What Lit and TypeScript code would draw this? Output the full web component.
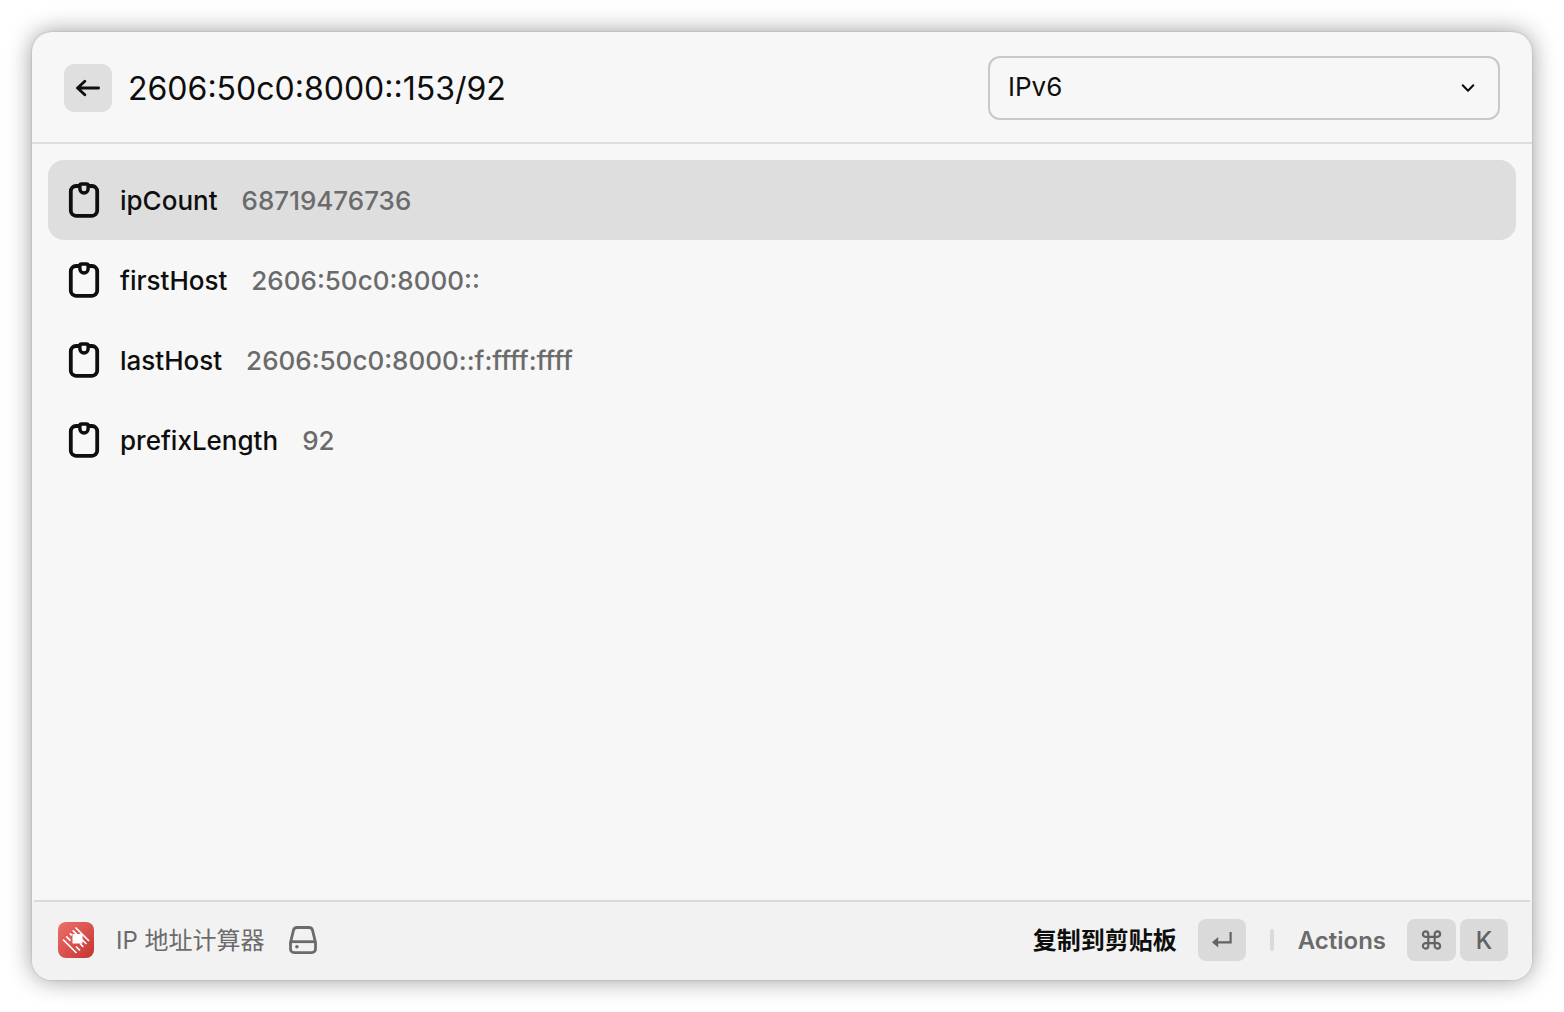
import { LitElement, html, css, svg } from "lit";
import { customElement, state } from "lit/decorators.js";
import { classMap } from "lit/directives/class-map.js";

interface Entry {
  name: string;
  value: string;
}

const entries: Entry[] = [
  { name: "ipCount", value: "68719476736" },
  { name: "firstHost", value: "2606:50c0:8000::" },
  { name: "lastHost", value: "2606:50c0:8000::f:ffff:ffff" },
  { name: "prefixLength", value: "92" },
];

const arrowIcon = html`<svg width="24" height="24" viewBox="0 0 24 24" fill="none" stroke="currentColor"
  stroke-width="2.8" stroke-linecap="round" stroke-linejoin="round" aria-hidden="true">
  <path d="M22.600 12H1.800M8.800 5.200L1.500 12l7.300 6.800" />
</svg>`;

const chevronIcon = html`<svg class="chevron" width="16" height="16" viewBox="0 0 16 16" fill="none" stroke="currentColor"
  stroke-width="2" stroke-linecap="round" stroke-linejoin="round" aria-hidden="true">
  <path d="M2.700 5.200L8 10.800l5.300-5.600" />
</svg>`;

const clipboardIcon = html`<svg width="32" height="40" viewBox="0 0 32 40" fill="none" stroke="currentColor"
  stroke-width="3.800" stroke-linejoin="round" aria-hidden="true">
  <path d="M11 6H8a5.200 5.200 0 0 0-5.200 5.200v19.400A5.200 5.200 0 0 0 8 35.800h16a5.200 5.200 0 0 0 5.200-5.200V11.200A5.200 5.200 0 0 0 24 6h-3" />
  <path d="M13.500 4h5a1.600 1.600 0 0 1 1.600 1.600v3.300a4.100 4.100 0 0 1-8.200 0V5.600A1.600 1.600 0 0 1 13.500 4z" stroke-width="3.400" />
</svg>`;

const logoLines = svg`
  <g stroke="#fff" stroke-width="1.700" stroke-linecap="round">
    <path d="M18 6L30.500 18.500M15.200 8.800L28 21.500M5.500 18L18 30.500" />
    <path d="M12.300 11.800l1 1M22.500 22l2.300 2.300M8.700 14.900l3.300 3.300M18.500 25l3 3" />
  </g>
  <path d="M14.500 12H24.500v9.500H14.500z" fill="#fff" />`;

const logoIcon = html`<svg width="36" height="36" viewBox="0 0 36 36" fill="none" aria-hidden="true">
  <defs>
    <linearGradient id="badge" x1="0" y1="0" x2="1" y2="1">
      <stop offset="0" stop-color="#ee6f6b" />
      <stop offset="1" stop-color="#c43531" />
    </linearGradient>
  </defs>
  <rect width="36" height="36" rx="8" fill="url(#badge)" />
  ${logoLines}
</svg>`;

const driveIcon = html`<svg width="28" height="28" viewBox="0 0 28 28" fill="none" stroke="currentColor"
  stroke-width="2.800" stroke-linejoin="round" aria-hidden="true">
  <path d="M1.500 16.500L4.500 4.200A3.600 3.600 0 0 1 8 1.500h12a3.600 3.600 0 0 1 3.500 2.700l3 12.300v6.500a3.600 3.600 0 0 1-3.600 3.600H5.100A3.600 3.600 0 0 1 1.500 23z" />
  <path d="M1.500 15.700h25" />
  <circle cx="7.900" cy="20.700" r="1.800" fill="currentColor" stroke="none" />
</svg>`;

const returnIcon = html`<svg width="20" height="16" viewBox="0 0 20 16" fill="none" aria-hidden="true">
  <path d="M18.600 0v10.300H5" stroke="currentColor" stroke-width="2.200" />
  <path d="M0 10.300L6.200 5v10.600z" fill="currentColor" />
</svg>`;

const commandIcon = html`<svg width="21" height="20" viewBox="0 0 20 20" fill="none" stroke="currentColor"
  stroke-width="2.200" aria-hidden="true">
  <path d="M6.800 6.800h6.400v6.400H6.800zM6.800 6.800H4.100a2.700 2.700 0 1 1 2.700-2.700zM13.200 6.800V4.100a2.700 2.700 0 1 1 2.700 2.700zM13.200 13.200h2.700a2.700 2.700 0 1 1-2.700 2.700zM6.800 13.200v2.700a2.700 2.700 0 1 1-2.700-2.700z" />
</svg>`;

@customElement("app-root")
export class AppRoot extends LitElement {
  @state() private selected = 0;

  static styles = css`
    :host {
      display: flex;
      box-sizing: border-box;
      min-height: 100vh;
      padding: 32px;
      background: #fff;
      color: #0e0e0e;
      font-family: Inter, "Noto Sans CJK SC", sans-serif;
    }
    * {
      box-sizing: border-box;
    }
    svg {
      display: block;
      flex: none;
    }
    button,
    input,
    select {
      margin: 0;
      padding: 0;
      border: 0;
      background: none;
      color: inherit;
      font: inherit;
      outline: none;
    }
    .window {
      flex: 1;
      display: flex;
      flex-direction: column;
      min-width: 0;
      border-radius: 20px;
      overflow: hidden;
      background: #f7f7f7;
      box-shadow: 0 0 2px rgba(0, 0, 0, 0.2), 0 0 24px rgba(0, 0, 0, 0.4);
    }
    .header {
      display: flex;
      align-items: center;
      gap: 16px;
      padding: 24px 32px 22px;
      border-bottom: 2px solid #dedede;
    }
    .back {
      display: grid;
      place-items: center;
      width: 48px;
      height: 48px;
      border-radius: 10px;
      background: #dfdfdf;
    }
    .query {
      flex: 1;
      min-width: 0;
      height: 48px;
      font-size: 32px;
    }
    .picker {
      display: grid;
      align-items: center;
      flex: 0 1 512px;
    }
    .picker select,
    .chevron {
      grid-area: 1 / 1;
    }
    .picker select {
      appearance: none;
      width: 100%;
      height: 64px;
      padding: 0 48px 4px 18px;
      border: 2px solid #c8c8c8;
      border-radius: 12px;
      font-size: 26px;
    }
    .chevron {
      justify-self: end;
      margin-right: 24px;
      pointer-events: none;
    }
    .list {
      flex: 1;
      margin: 0;
      padding: 16px;
      list-style: none;
    }
    .row {
      display: flex;
      align-items: center;
      width: 100%;
      height: 80px;
      padding: 0 20px;
      border-radius: 16px;
      font-size: 26px;
      font-weight: 500;
      text-align: left;
    }
    .row.selected {
      background: #dedede;
    }
    .name {
      margin: 0 24px 0 20px;
    }
    .value {
      color: #6b6b6b;
    }
    .footer {
      display: flex;
      align-items: center;
      justify-content: space-between;
      height: 80px;
      margin: 0 2px;
      padding: 0 22px 2px 24px;
      border-top: 2px solid #dadada;
      color: #6b6b6b;
      font-size: 24px;
      line-height: 28px;
    }
    .base {
      background: #f2f2f2;
    }
    .side,
    .action,
    .keys {
      display: flex;
      align-items: center;
    }
    .label {
      padding-top: 2px;
    }
    .title {
      margin: 0 24px 0 22px;
    }
    .action {
      gap: 21px;
      font-weight: 600;
    }
    .primary {
      color: #0e0e0e;
    }
    .keys {
      gap: 4px;
    }
    .key {
      display: grid;
      place-items: center;
      min-width: 48px;
      height: 42px;
      padding: 0 14px;
      border-radius: 8px;
      background: #dadada;
      color: #636363;
      font: inherit;
      font-weight: 500;
    }
    .divider {
      width: 4px;
      height: 22px;
      margin: 0 24px;
      border-radius: 2px;
      background: #dadada;
    }
  `;

  render() {
    return html`
      <main class="window">
        <header class="header">
          <button class="back" aria-label="Back">${arrowIcon}</button>
          <input class="query" type="text" aria-label="Address" value="2606:50c0:8000::153/92" spellcheck="false" />
          <div class="picker">
            <select aria-label="IP version">
              <option>IPv6</option>
            </select>
            ${chevronIcon}
          </div>
        </header>
        <ul class="list">
          ${entries.map(
            (entry, index) => html`<li>
              <button
                class=${classMap({ row: true, selected: index === this.selected })}
                @click=${() => (this.selected = index)}
              >
                ${clipboardIcon}
                <span class="name">${entry.name}</span>
                <span class="value">${entry.value}</span>
              </button>
            </li>`
          )}
        </ul>
        <div class="base">
          <footer class="footer">
            <div class="side">
              ${logoIcon}
              <span class="label title">IP 地址计算器</span>
              ${driveIcon}
            </div>
            <div class="side">
              <button class="action primary">
                <span class="label">复制到剪贴板</span>
                <kbd class="key">${returnIcon}</kbd>
              </button>
              <span class="divider"></span>
              <button class="action">
                <span class="label">Actions</span>
                <span class="keys">
                  <kbd class="key">${commandIcon}</kbd>
                  <kbd class="key"><span class="label">K</span></kbd>
                </span>
              </button>
            </div>
          </footer>
        </div>
      </main>
    `;
  }
}
